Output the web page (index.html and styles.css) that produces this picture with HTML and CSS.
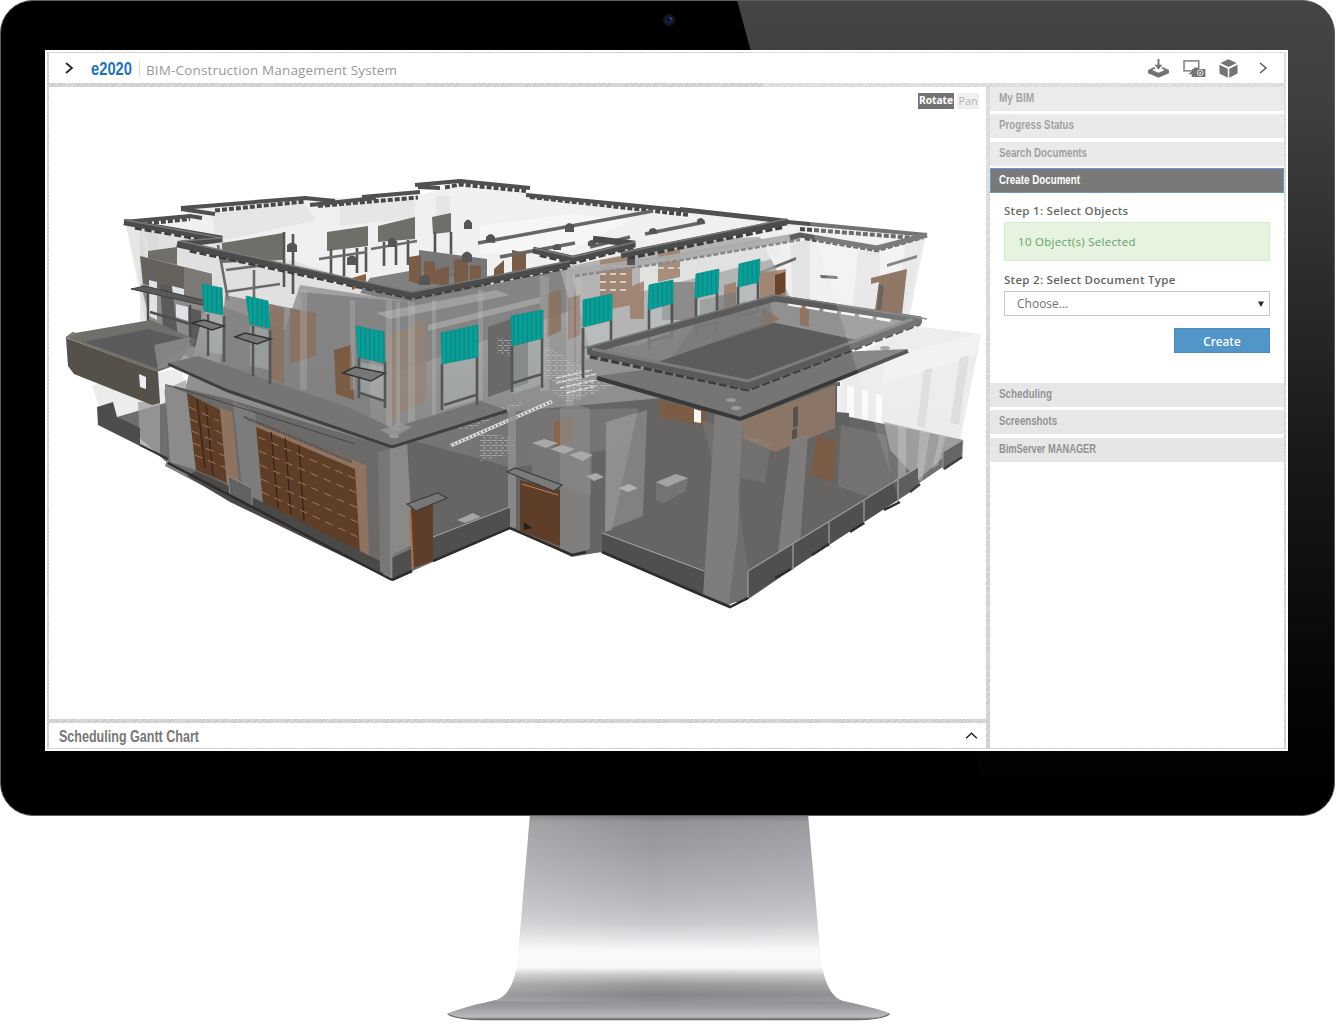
FILE: index.html
```html
<!DOCTYPE html>
<html lang="en">
<head>
<meta charset="utf-8">
<title>e2020 BIM-Construction Management System</title>
<link rel="stylesheet" href="styles.css">
</head>
<body>
<div class="monitor">
  <svg class="camera" viewBox="0 0 14 14"><circle cx="7" cy="7" r="6" fill="#15151c"/><circle cx="7" cy="7" r="3.6" fill="#1c1b4e"/><circle cx="6.4" cy="6.8" r="1.7" fill="#06061a"/><circle cx="8.6" cy="5.6" r="1" fill="#5a5aa8"/></svg>
  <div class="screen">
    <header class="topbar">
      <svg class="chev" viewBox="0 0 10 14"><path d="M2 2l6 5-6 5" fill="none" stroke="#222" stroke-width="1.700"/></svg>
      <svg class="brand" viewBox="0 0 42 24"><text x="0" y="19" textLength="41" lengthAdjust="spacingAndGlyphs">e2020</text></svg>
      <span class="product">BIM-Construction Management System</span>
      <nav class="tools">
        <svg class="tool" viewBox="0 0 22 20"><path d="M0 11.500l6.500-3.200 1.500 1.500-3.500 1.800L11 14.600l6.500-3-3.500-1.800 1.500-1.500 6.500 3.200v3.500L11 19.800 0 15z" fill="#444"/><path d="M10 0h2v6h3.200L11 11 6.800 6H10z" fill="#444"/></svg>
        <svg class="tool wide" viewBox="0 0 24 20"><rect x="1.500" y="2" width="15.500" height="10.500" fill="none" stroke="#555" stroke-width="1.600"/><path d="M6 16l3-2.500h3V16z" fill="#444"/><path d="M10 10.500h1.500l1-1.500h3l1 1.500H24V19H9.500z" fill="#444"/><circle cx="18.500" cy="14.500" r="3" fill="#444" stroke="#eee"/><circle cx="18.500" cy="14.500" r="1.200" fill="#ddd"/></svg>
        <svg class="tool" viewBox="0 0 20 20"><path d="M10 .3l8.600 4L10 8.500 1.400 4.300z" fill="#444"/><path d="M.5 6l8.700 4.200v9.500L.5 15.300zM19.500 6l-8.700 4.200v9.500l8.700-4.400z" fill="#444"/></svg>
        <svg class="chev" viewBox="0 0 10 14"><path d="M2 2l6 5-6 5" fill="none" stroke="#222" stroke-width="1.500"/></svg>
      </nav>
    </header>

    <main class="viewer">
      <svg class="scene" viewBox="49 87 937 632">
        <defs>
          <pattern id="slats" width="4.500" height="10" patternUnits="userSpaceOnUse"><rect width="4.500" height="10" fill="#0a9f99"/><rect width="1.200" height="10" fill="#0a8782"/></pattern>
          <pattern id="bricks" width="6" height="5" patternUnits="userSpaceOnUse"><path d="M0 .5h5M3 3h4" stroke="#c8c8c8" stroke-width=".6"/></pattern>
          <linearGradient id="wall" x2="0" y2="1"><stop stop-color="#a5a5a5"/><stop offset="1" stop-color="#6b6a69"/></linearGradient>
        </defs>

        <!-- translucent upper shell -->
        <path d="M126 225L190 216 183 210 305 199 420 195 460 184 528 192 700 213 925 238 900 330 570 350 400 330 155 350z" fill="#f0f0f0"/>
        <path d="M126 225l14 3 14 94-8 3zM146 228h10l8 50-10 2zM212 214l90-14 14 20-100 22zM340 204l75-6v20l-75 8zM436 196h14v26h-14zM290 205l12-1v16l-12 3z" fill="#dcdcdc" opacity=".5"/>
        <path d="M790 245l20-6v80l-16 4zM858 250l22-2v70h-28zM905 245l20-6-16 80h-12z" fill="#dedede" opacity=".7"/>
        <path d="M140 228L178 235 222 240 410 296 570 264 570 350 400 400 140 330z" fill="#c4c4c4" opacity=".35"/>
        <path d="M480 226l90-12 60 6-60 30-90 4z" fill="#fff" opacity=".4"/>
        <path d="M820 275l17 1 1 3-17-1zM887 264l30-9v3l-30 9zM758 272l38-15v3l-38 15z" fill="#6a6a6a"/>

        <!-- translucent box on the right -->
        <path d="M905 325l76 9-21 108-125-28 10-50z" fill="#e6e6e6" opacity=".85"/>
        <path d="M885 358l96-25-3 20-96 32z" fill="#f0f0f0"/>
        <path d="M924 370l8-2-7 60-8-2zM960 358l9-3-10 70-9-2z" fill="#cfcfcf" opacity=".6"/>
        <path d="M847 385l7 2v30l-7-1zM862 390l6 1v30l-6-1zM876 394l6 1v30l-6-1z" fill="#fbfbfb"/>

        <!-- left tower interior -->
        <path d="M148 251l29-4v18l-29-7zM222 243l61-10v27l-61 3z" fill="#706e69"/>
        <path d="M141 284L212 300 212 372 180 352 152 330z" fill="#8b8b8b"/>
        <path d="M140 256L212 274 212 304 143 284z" fill="#65625d"/>
        <path d="M184 267l28 7v28l-28-6z" fill="#7c7a76"/>
        <path d="M327 232l41-6v20l-41 5zM378 226l37-9v22l-37 3zM432 217l19-4v19l-18 2z" fill="#706e69"/>
        <path d="M331 249v28M344 249v27M357 248v25M366 247v25M384 242v24M396 241v24M408 240v25M435 232v22M451 232v22M284 232v55M293 234v60" stroke="#555" stroke-width="2.600"/>
        <path d="M319 259l48-7M371 249l46-8M226 270l55-7M225 292l55-8M218 245l10 55M254 270v30" stroke="#6b6b6b" stroke-width="2.600"/>
        <path d="M149 280l8 2v38l-8-4zM172 286l12 3v12l-12-3zM176 304l12 3v14l-12-4z" fill="#dfe3e5"/>
        <path d="M160 284l12 3 6 50-15-7zM190 308l11 3v40l-10-6z" fill="#5a5a5a"/>
        <path d="M131 289l14-3 65 16-8 3z" fill="#5a5a5a" stroke="#3e3e3e"/>
        <path d="M148 292v38M150 312l40 12M190 305v42M205 320v34" stroke="#4e4e4e" stroke-width="2.400"/>

        <!-- interior floors seen through the top -->
        <path d="M419 250l68 9v34l-70 12-30-18 32-10z" fill="#777"/>
        <path d="M370 278l45-8 55 10-60 25-50-12z" fill="#808080"/>
        <path d="M409 257l12-2v30l-12-4zM424 261l11 1v22l-11-1zM454 260l14-2v26l-14-1zM470 265l11 1v17l-11-1zM494 269l10-9v19h-10zM512 250l14 3v26l-14-4zM435 270l14-4v20l-14-2z" fill="#795c48"/>
        <path d="M352 278l14-4v10l-14 6z" fill="#8a6042"/>

        <!-- main body mass -->
        <path d="M206 300L285 330 300 285 412 302 570 268 590 350 640 345 745 300 810 380 745 425 740 600 725 606 600 552 572 557 510 528 392 580 230 500 165 466 190 370z" fill="url(#wall)"/>
        <path d="M225 295l75 15 70 40v70l-150-55z" fill="#7e7e7e" opacity=".8"/>
        <path d="M570 266l130-27 60-2 30 60-190 55-30-20z" fill="#a0a0a0" opacity=".75"/>
        <path d="M640 262l130-22 14 16-40 10-104 26z" fill="#ececec" opacity=".8"/>
        <path d="M300 292l110 10 150-32 12 40-170 60-100-30z" fill="#848484"/>
        <path d="M376 313l120-23 14 5-120 24zM428 325l112-28v6l-112 28z" fill="#a0a0a0"/>
        <path d="M488 327l40-14v70l-40 14z" fill="#696969"/>
        <path d="M290 308l26 5v42l-26 9zM270 304l14 4v76l-14-5z" fill="#8a6f5e" opacity=".8"/>
        <path d="M334 350l17-5 3 55-18-6z" fill="#7b5c45"/>
        <path d="M386 337l40-18v82l-40 20zM388 350l8 3v52l-8-3z" fill="#958376" opacity=".8"/>
        <path d="M547 294l14-5v42l-14 6zM568 298l12-3v40l-12 5z" fill="#8a6f5e" opacity=".8"/>
        <path d="M600 260l32-5v50l-32 6zM630 287l14-6v38h-14zM658 254l22-5v28l-22 5zM724 285l12-3v28l-12 3zM760 273l26-4v27l-26 8z" fill="#9a7a64" opacity=".8"/>
        <path d="M600 266h30M600 274h30M600 282h30M600 290h30M658 260h22M658 268h22" stroke="#e9e3de" stroke-width="1.500" stroke-dasharray="6 4"/>
        <path d="M871 278l36-9-5 45-27-4 4-28-8 2z" fill="#7b5c48"/>
        <path d="M884 286l-3 24-4 0 2-26z" fill="#4c4541"/>
        <path d="M775 275l10-3v20l-10 5z" fill="#6a4329"/>
        <path d="M662 282h34v38h-34zM700 300l36-8v24h-36z" fill="#7a7a7a" opacity=".7"/>

        <!-- vertical glass ribs -->
        <path d="M386 300h6v135h-6zM396 302h4v130h-4zM408 302h7v128h-7zM432 300h4v118h-4zM478 290h5v110h-5zM540 276h9v115h-9zM566 266h8v140h-8zM576 270h5v130h-5zM300 290h7v100h-7zM350 300h5v90h-5z" fill="#c4c4c4" opacity=".28"/>

        <!-- slab at the left -->
        <path d="M92 385l8 25 60 28 30-10-8-60z" fill="#ececec"/>
        <path d="M117 417l48-14 40 10-4 50-36-2z" fill="#6f6e6d"/>
        <path d="M138 402h22v52l-20-10zM164 390l22-10 10 85-24-8z" fill="#a0a0a0" opacity=".75"/>
        <path d="M97 407l16-5 4 15 23 11 0 18-42-21z" fill="#4d4d4d"/>
        <path d="M67 338l8-5 76-13 45 20-20 25-19 7z" fill="#716f6b"/>
        <path d="M84 342l64-13 45 12-37 27z" fill="#5b5b5b"/>
        <path d="M154 345l35-8 4 24-35 8z" fill="#8d8d8d" opacity=".8"/>
        <path d="M66 338l92 34 2 31-8 2-78-31-6-8z" fill="#55514a"/>
        <path d="M66 338l7-5 4 2-5 4 82 31" fill="none" stroke="#76736c" stroke-width="2"/>
        <path d="M139 374l7 3v12l-6-2z" fill="#eee"/>
        <path d="M140 445l32 16 50 25" stroke="#333" stroke-width="2"/>

        <!-- facade below the ledge -->
        <path d="M165 384l60 14 167 50-2 130-160-80-62-35z" fill="#6c6a69"/>
        <path d="M165 385l22 8 9 77-26-8z" fill="#8b8b8b"/>
        <path d="M233 402l22 10 8 92-20-8z" fill="#7c7c7c"/>
        <path d="M187 393l33 17 7 73-31-13z" fill="#5e3e28"/>
        <path d="M220 408l12 4 7 69-12 4z" fill="#907260"/>
        <path d="M256 425l100 43 4 84-97-48z" fill="#5e3e28"/>
        <path d="M256 423l110 42 3 92-9-5-5-83-99-42z" fill="#907260"/>
        <path d="M197 399l8 69M206 405l7 70M271 432l7 76M285 438l6 76M299 445l5 76" stroke="#3a2416" stroke-width="1.300"/>
        <path d="M189 407l30 14M190 419l31 14M192 431l31 14M193 443l32 13M195 455l31 13M258 437l98 42M259 451l98 42M260 465l98 43M261 479l98 44M262 492l98 46" stroke="#a97552" stroke-width="1" stroke-dasharray="8 6"/>
        <path d="M196 471l31 14 35 17 130 65v13l-162-78-43-26z" fill="#4b4948"/>
        <path d="M228 476l24 12v18l-22-10z" fill="#626262" stroke="#999" stroke-width=".8"/>
        <path d="M244 417l108 45" stroke="#4a4a4a" stroke-width="2.500" stroke-dasharray="1.500 1"/>
        <path d="M175 387l180 57" stroke="#444"/>

        <!-- central court -->
        <path d="M392 448L507 412 640 400 740 425 730 605 602 552 572 556 510 528 412 570z" fill="#676563"/>
        <path d="M410 440l90-30 170-2 44 20-200 40z" fill="#8b8a89" opacity=".45"/>
        <path d="M450 444l101-44 2 3-101 44z" fill="#dedede"/>
        <path d="M450 446l101-44" stroke="#888" stroke-width="2" stroke-dasharray="2 2"/>
        <path d="M480 432l35 6v15l-35 8zM440 430l50-20 40-10-60 30zM550 390l60-16 8 10-50 18z" fill="url(#bricks)"/>
        <path d="M497 337l16 3v16l-16-2zM545 345l50 30v20l-60-20z" fill="url(#bricks)"/>
        <path d="M556 378l36-8M556 383l40-9M560 388l36-8M566 393l30-7" stroke="#d7d7d7" stroke-width="1.600" stroke-dasharray="5 1"/>
        <path d="M532 443l12-4 48 15-1 42-59-21z" fill="#787878" opacity=".9"/>
        <path d="M606 422l41-12-4 110-38 12z" fill="#949494" opacity=".75"/>
        <path d="M656 482l20-8 12 4-2 13-22 12-8-3z" fill="#747474"/><path d="M656 482l20-8 12 4-21 9z" fill="#a3a3a3"/>
        <path d="M619 488l10-4 9 4-1 14-10 4-8-4z" fill="#a5a5a5" opacity=".4"/>
        <path d="M619 488l10-4 9 4-10 4zM457 520l16-7 8 4-16 6z" fill="#a5a5a5"/>
        <path d="M554 422l20-6v25l-20 6z" fill="#8c664c"/>
        <path d="M390 446l17-5 6 104-20 9v26l-10-5z" fill="#8a8988"/>
        <path d="M378 452l12-3v128l-10-6z" fill="#777"/>
        <path d="M508 410l8-2v120l-8-1z" fill="#909090" opacity=".8"/>
        <path d="M560 408l16-4 14 5v140l-18 6-12-5z" fill="#8b8a89" opacity=".7"/>
        <path d="M532 443l12-4 14 4-12 5zM550 449l12-4 13 4-11 5zM569 455l12-4 12 4-10 6zM586 476l10-3 8 4-10 4z" fill="#a9a9a9"/>
        <path d="M392 557l20-9v24l-20 8z" fill="#4e4e4e" stroke="#888" stroke-width=".8"/>
        <path d="M433 537l77-30v21l-77 32z" fill="#4f4f4f"/><path d="M433 537l77-30" stroke="#aaa"/>
        <path d="M411 508l22-5v58l-20 7z" fill="#5e3e28"/><path d="M410 510l3 58" stroke="#a5714b" stroke-width="2"/>
        <path d="M407 504l31-11 9 5-31 13z" fill="#777" stroke="#3e3e3e" stroke-width="1.200"/>
        <path d="M520 480l40 10v56l-40-15z" fill="#5e3e28"/><path d="M522 484l36 11" stroke="#b98561"/>
        <path d="M524 522l8 6-8 2z" fill="#222"/>
        <path d="M507 472l8-4 47 17-8 6z" fill="#7b7b7b" stroke="#3e3e3e" stroke-width="1.200"/>

        <!-- right hall -->
        <path d="M640 400l200-18 0 33 123 25-1 14-215 146-8 3-130-60z" fill="#676563"/>
        <path d="M837 386l8 0v30l-8-2z" fill="#eee"/>
        <path d="M607 422l40-12-4 106-38 15z" fill="#949494" opacity=".6"/>
        <path d="M656 482l20-8 12 4-2 13-22 12-8-3z" fill="#747474"/><path d="M656 482l20-8 12 4-21 9z" fill="#a3a3a3"/>
        <path d="M619 488l10-4 9 4-10 4z" fill="#b2b2b2"/>
        <path d="M602 533l102 38v26l-102-45z" fill="#4f4f4f"/><path d="M602 533l102 38" stroke="#aaa"/>
        <path d="M660 400l46 10v16l-46-8z" fill="#7b5c45"/><path d="M694 409l7 2v12l-7-1z" fill="#f5f5f5"/>
        <path d="M743 420l92-35v43l-60 24-32-14z" fill="#8b7566"/>
        <path d="M702 420l69 23-6 40-50-10z" fill="#8b8a89" opacity=".3"/>
        <path d="M793 408l5-2v20l-5 2zM792 430l5-2v10l-5 2z" fill="#56514d"/>
        <path d="M817 435l20 6-4 41-22-6z" fill="#795b46"/>
        <path d="M836 412l13 1v18l-13-3z" fill="#606060"/>
        <path d="M841 425l45 10 6 55-20 8-34-12z" fill="#7e7d7c" opacity=".6"/>
        <path d="M884 422l78 18-44 40-28-30z" fill="#9b9b9b" opacity=".85"/>
        <path d="M898 425l8 2v50l-8 4zM920 430l10 2-8 50-6-4zM940 434l6 1-8 30-6 4z" fill="#c6cacc" opacity=".4"/>
        <path d="M715 412l28 7-5 115-9 70-26-8z" fill="#7f7d7b"/>
        <path d="M743 419l-5 115-9 70 19-6v-30l-10-70z" fill="#716f6d"/>
        <path d="M791 440l17-6-8 110-22 8z" fill="#82807e" opacity=".9"/>
        <path d="M748 571l170-104v20L748 598z" fill="#4f4f4f"/>
        <path d="M943 452l20-12-1 18-19 11z" fill="#555" stroke="#999" stroke-width=".8"/>
        <path d="M748 571l170-104M748 571v26M793 544v26M829 522v25M864 501v24M898 480v22" fill="none" stroke="#9a9a9a" stroke-width="1.300"/>
        <path d="M392 580l20-9M433 561l77-33 62 27 14-3M602 552l102 44 26 11 18-9M775 578l16-9M812 555l17-11M850 532l14-9M884 510l16-8M910 492l10-8M944 469l18-12M168 463l224 117" fill="none" stroke="#2d2b2b" stroke-width="2.500"/>

        <!-- ledge band -->
        <path d="M168 363l30-7 152 52 42 20 88-27 27 9-115 38-42-15-120-42z" fill="#757575"/>
        <path d="M168 364l60 27 164 56 115-36" fill="none" stroke="#3f3f3f" stroke-width="3"/>
        <path d="M380 430l20-7 12 4-18 10z" fill="#a1a1a1" opacity=".6"/>

        <!-- window frames under the awnings -->
        <g fill="#c4cacc" opacity=".35"><path d="M206 312l17 3v40l-17-4zM250 326l19 4v40l-19-4zM360 362l25 5v33l-25-5zM443 364l33-8v44l-33 10zM513 346l30-8v46l-30 10zM585 328l27-8v30l-27 10zM650 312l20-8v28l-20 8zM697 300l20-6v30l-20 6zM740 288l18-6v28l-18 6z"/></g>
        <path d="M208 314v42M224 316v46M253 326v50M270 330v54M359 358v40M385 362v46M442 364v46M477 357v48M512 346v46M542 338v50M583 328v50M611 320v30M649 310v40M672 303v36M696 298v40M717 293v40M738 287v32M758 282v30M444 405l32-10M513 383l29-9M360 393l25 8M697 327l20-5M740 316l18-5M650 341l20-5" stroke="#555" stroke-width="2.600"/>
        <g fill="#777" stroke="#333" stroke-width="1.400"><path d="M192 323l12-3 20 6-12 4zM235 337l10-4 26 6-14 5zM343 373l12-6 30 6-14 8z"/></g>
        <g fill="url(#slats)" stroke="#0b8f89" stroke-width=".8"><path d="M202 284l20 4 1 27-19-4zM246 296l22 5 2 27-20-4zM356 326l28 6 1 31-27-6zM441 333l37-8v32l-36 7zM511 316l32-6v28l-31 8zM583 300l29-6v26l-29 7zM649 285l24-5v23l-25 7zM696 274l23-5-1 24-23 5zM739 264l21-5-1 23-21 5z"/></g>

        <!-- rear cornices -->
        <g fill="none" stroke-linejoin="round">
          <path d="M140 224l50-5M215 210.500l90-9M318 206l100-8.500M445 187.500l15-3 66 6.500M530 197l160 18M800 229l115 9" stroke="#484848" stroke-width="4" stroke-dasharray="5 2"/>
          <path d="M124 222l66-6 12 2M181 208l124-10 30 3M181 209l34 5M310 205l66-7M362 197l58-5M415 185l45-4 70 7M418 187l22 1M526 195l174 17 88 10 139 13M680 209l108 12" stroke="#505050" stroke-width="4"/>
          <path d="M478 243l175-32M500 257l75-14M590 247l40-10M645 234l60-12" stroke="#666" stroke-width="3.500"/>
          <path d="M570 272l90-12 140-24" stroke="#aaa" stroke-width="7" opacity=".9"/>
          <path d="M575 276l90-13 135-23" stroke="#888" stroke-width="2.500" stroke-dasharray="5 2"/>
          <path d="M805 238.500l72 12 46-13" stroke="#505050" stroke-width="3.500" stroke-dasharray="5 2"/>
          <path d="M790 238l10-3 77 13 50-13" stroke="#5c5c5c" stroke-width="5"/>
        </g>
        <g fill="#555"><path d="M464 229v-6q4-7 8 0v6zM486 242v-5q5-6 9 0v6zM565 232v-6q4-6 9 0v6zM649 234v-4q4-4 8 0v4zM462 262v-7q5-7 10 0v7zM419 285v-7q6-7 11 0v7zM388 247v-7q4-5 8 0v7zM287 252v-7q5-5 10 0v7zM347 265v-7q5-5 10 0v7zM553 250v-4q4-4 8 0v4zM588 246v-4q4-4 8 0v4zM697 224v-4q4-4 7 0v4zM627 265v-6q4-6 8 0v6z"/></g>

        <!-- front cornices -->
        <g fill="none" stroke-linejoin="bevel">
          <path d="M135 227l80 14M190 250l222 47.500 155-30.500M540 254.500l33 7.500 60-15.500M628 257.500l155-31" stroke="#3d3d3d" stroke-width="5" stroke-dasharray="7 3"/>
          <path d="M124 222l98 17-40 5M177 244l234 51 159-31M533 250l40 9 62-15-42-5M621 255l166-33" stroke="#4b4b4b" stroke-width="6.500"/>
          <path d="M125 220l97 18-42 3 232 51 158-31M533 248l40 9 62-15M621 253l166-34" stroke="#777" stroke-width="1.600"/>
        </g>

        <!-- entrance canopy -->
        <path d="M597 376l150-20 161-7-168 72z" fill="#757575"/>
        <path d="M597 378l143 41 168-68" fill="none" stroke="#393939" stroke-width="4"/>
        <path d="M590 351L775 297 922 319 748 385z" fill="#808080" opacity=".85"/>
        <path d="M652 364l119-42 86 18-109 42z" fill="#5c5c5c"/>
        <path d="M762 307l18 12-10 5-10-2zM800 306l9 1v20l-9-2z" fill="#8f7562"/>
        <path d="M700 318l70-20 3 26-100 32z" fill="#777" opacity=".6"/>
        <path d="M788 303l106 17" stroke="#f4f4f4" stroke-width="5" stroke-dasharray="14 4"/>
        <path d="M590 356l158 33 172-66" fill="none" stroke="#3b3b3b" stroke-width="5" stroke-dasharray="8 3"/>
        <path d="M588 351L775 298 921 320 748 386z" fill="none" stroke="#5b5b5b" stroke-width="7" stroke-linejoin="bevel"/>
        <path d="M584 348L775 295l152 24" fill="none" stroke="#777" stroke-width="1.500"/>
        <path d="M592 349l156 32 165-62" fill="none" stroke="#7c7c7c" stroke-width="3"/>
        <g fill="#999"><ellipse cx="731" cy="400" rx="5" ry="2"/><ellipse cx="736" cy="408" rx="5" ry="2"/><ellipse cx="885" cy="348" rx="5" ry="2"/><ellipse cx="396" cy="429" rx="5" ry="2"/><ellipse cx="394" cy="436" rx="5" ry="2"/></g>
      </svg>
      <div class="modes"><button class="mode on">Rotate</button><button class="mode">Pan</button></div>
    </main>

    <aside class="sidebar">
      <div class="item"><svg class="cond" viewBox="0 0 180 22"><text x="0" y="15" textLength="35" lengthAdjust="spacingAndGlyphs">My BIM</text></svg></div>
      <div class="item"><svg class="cond" viewBox="0 0 180 22"><text x="0" y="15" textLength="75" lengthAdjust="spacingAndGlyphs">Progress Status</text></svg></div>
      <div class="item"><svg class="cond" viewBox="0 0 180 22"><text x="0" y="15" textLength="88" lengthAdjust="spacingAndGlyphs">Search Documents</text></svg></div>
      <div class="item active"><svg class="cond" viewBox="0 0 180 22"><text x="0" y="15" textLength="81" lengthAdjust="spacingAndGlyphs">Create Document</text></svg></div>
      <section class="form">
        <h2 class="step">Step 1: Select Objects</h2>
        <div class="notice">10 Object(s) Selected</div>
        <h2 class="step two">Step 2: Select Document Type</h2>
        <div class="select"><span>Choose...</span><svg class="caret" viewBox="0 0 6 6"><path d="M0 .5h6L3 6z"/></svg></div>
        <button class="create">Create</button>
      </section>
      <div class="item"><svg class="cond" viewBox="0 0 180 22"><text x="0" y="15" textLength="53" lengthAdjust="spacingAndGlyphs">Scheduling</text></svg></div>
      <div class="item"><svg class="cond" viewBox="0 0 180 22"><text x="0" y="15" textLength="58" lengthAdjust="spacingAndGlyphs">Screenshots</text></svg></div>
      <div class="item"><svg class="cond" viewBox="0 0 180 22"><text x="0" y="15" textLength="97" lengthAdjust="spacingAndGlyphs">BimServer MANAGER</text></svg></div>
    </aside>

    <footer class="gantt">
      <svg class="gantt-title" viewBox="0 0 220 24"><text x="0" y="17.500" textLength="140" lengthAdjust="spacingAndGlyphs">Scheduling Gantt Chart</text></svg>
      <svg class="up" viewBox="0 0 14 10"><path d="M1 8l6-5.500L13 8" fill="none" stroke="#222" stroke-width="1.600"/></svg>
    </footer>
  </div>
  <svg class="glare" viewBox="0 0 1335 815">
    <defs><linearGradient id="shine" x2="0" y2="1"><stop stop-color="#fff" stop-opacity=".27"/><stop offset=".12" stop-color="#fff" stop-opacity=".25"/><stop offset=".55" stop-color="#fff" stop-opacity=".1"/><stop offset=".85" stop-color="#fff" stop-opacity=".02"/><stop offset="1" stop-color="#fff" stop-opacity="0"/></linearGradient></defs>
    <path d="M737 0L750 48 793 170 857 370 937 620 975 755 990 815H1335V0z" fill="url(#shine)"/>
  </svg>
</div>
<svg class="stand" viewBox="440 815 460 209">
  <defs>
    <linearGradient id="metal" gradientUnits="userSpaceOnUse" x1="0" y1="815" x2="0" y2="1019">
      <stop stop-color="#77787b"/><stop offset=".03" stop-color="#929396"/><stop offset=".17" stop-color="#9d9ea2"/><stop offset=".33" stop-color="#adaeb2"/><stop offset=".45" stop-color="#bbbcc0"/><stop offset=".53" stop-color="#cbcbcf"/><stop offset=".6" stop-color="#e2e2e5"/><stop offset=".66" stop-color="#f9f9fb"/><stop offset=".745" stop-color="#f7f7f9"/><stop offset=".78" stop-color="#c6c6c9"/><stop offset=".83" stop-color="#99999c"/><stop offset=".88" stop-color="#858588"/><stop offset=".94" stop-color="#9c9da0"/><stop offset=".985" stop-color="#b9babd"/><stop offset="1" stop-color="#808184"/>
    </linearGradient>
    <linearGradient id="sheen"><stop stop-color="#fff" stop-opacity=".2"/><stop offset=".45" stop-color="#fff" stop-opacity="0"/><stop offset="1" stop-color="#fff" stop-opacity=".1"/></linearGradient>
  </defs>
  <path d="M529.500 815H808.500L820 945C822 975 829 998 846 1001 865 1005 880 1009 890 1012.500 892 1015 880 1018 862 1019H475C458 1018 444 1015 448 1012.500 462 1007 480 1003 493 1000 511 996 517 975 518.500 945z" fill="url(#metal)"/>
  <path d="M529.500 815H808.500L820 945C822 975 829 998 846 1001H493C511 996 517 975 518.500 945z" fill="url(#sheen)"/>
  <path d="M447 1013.500C455 1018 468 1019 480 1019H858C872 1019 885 1017 890 1013.500" fill="none" stroke="#696b70" stroke-width="1.300"/>
</svg>
</body>
</html>
```
FILE: styles.css
```css
* { box-sizing: border-box; }
body { margin: 0; width: 1336px; height: 1024px; overflow: hidden; background: #fff; font-family: "Open Sans", sans-serif; color: #444; }
svg { display: block; }
button { border: 0; padding: 0; font-family: inherit; }

.monitor { position: relative; width: 1335px; height: 815.500px; padding: 12px 0 0 44px; background: #000; border: 1px solid #5c5e5e; border-radius: 33px; overflow: hidden; }
.camera { width: 14px; height: 14px; margin: 0 0 23px 617px; }
.screen {
  display: grid; grid-template: 30px 632px 25px / 937px 294px; gap: 4px;
  width: 1243px; height: 701px; padding: 1px 2px; border: 2px solid #fff;
  background: repeating-linear-gradient(135deg, #c6c8c7 0 1px, #dcdcdc 1px 2.500px);
}
.glare { position: absolute; left: -1px; top: -1px; width: 1335px; height: 815px; pointer-events: none; }

.topbar { grid-column: 1 / 3; display: flex; align-items: center; background: #fff; padding: 0 16px 0 15px; }
.chev { width: 10px; height: 14px; }
.brand { width: 42px; height: 24px; margin-left: 17px; overflow: visible; font: bold 18.500px "Liberation Sans", sans-serif; fill: #1c75b8; }
.product { margin-left: 6px; padding-left: 6px; border-left: 1px solid #ddd; height: 17px; line-height: 21px; font-size: 13.500px; letter-spacing: .15px; color: #999; white-space: nowrap; }
.tools { display: flex; align-items: center; margin-left: auto; }
.tool { width: 21px; height: 19px; margin-right: 13px; }
.wide { width: 24px; margin-right: 12px; }
.tools .chev { margin-left: 6px; }

.viewer { position: relative; background: #fff; }
.scene { width: 937px; height: 632px; }
.modes { position: absolute; top: 6px; right: 7px; display: flex; gap: 3px; }
.mode { width: 22px; height: 15.500px; line-height: 15.500px; font-size: 10.800px; letter-spacing: -.05px; background: #ebebeb; color: #999; text-align: center; white-space: nowrap; }
.mode.on { width: 36px; font-size: 10.300px; background: #454545; color: #fff; font-weight: 700; }

.sidebar { grid-row: 2 / 4; grid-column: 2; display: flex; flex-direction: column; gap: 3.300px; background: #fff; }
.item { height: 24px; flex: none; padding: 0 9px; background: #e4e4e4; color: #858585; }
.active { background: #555; color: #fff; border: 1px solid #3d79c9; padding: 0 8px; margin-top: -.8px; height: 25px; }
.cond { width: 180px; height: 22px; overflow: visible; font: bold 12.500px "Liberation Sans", sans-serif; fill: currentColor; }
.form { height: 183.500px; flex: none; padding: 6px 14px 0; display: flex; flex-direction: column; }
.step { margin: 0; height: 17px; line-height: 17px; font-size: 11.500px; font-weight: 600; letter-spacing: .28px; white-space: nowrap; }
.notice { height: 39px; margin-top: 3px; padding-left: 13px; border: 1px solid #cfe8c2; background: #dff0d8; color: #3c8a45; line-height: 37px; font-size: 11.500px; letter-spacing: .3px; }
.two { margin-top: 10px; }
.select { display: flex; justify-content: space-between; align-items: center; height: 25px; margin-top: 3px; padding: 0 5px 0 12px; border: 1px solid #bbb; font-size: 12px; color: #555; }
.caret { width: 6px; height: 6px; }
.create { align-self: flex-end; width: 96px; height: 25px; margin-top: 12px; background: #3583bf; border: 1px solid #2a76b4; color: #fff; font-size: 11.700px; font-weight: 600; }

.gantt { display: flex; align-items: center; justify-content: space-between; background: #fff; padding: 0 8px 0 10px; }
.gantt-title { width: 220px; height: 24px; overflow: visible; font: bold 16px "Liberation Sans", sans-serif; fill: #777; }
.up { width: 13px; height: 9px; }

.stand { width: 460px; height: 208.500px; margin-left: 440px; }
```
